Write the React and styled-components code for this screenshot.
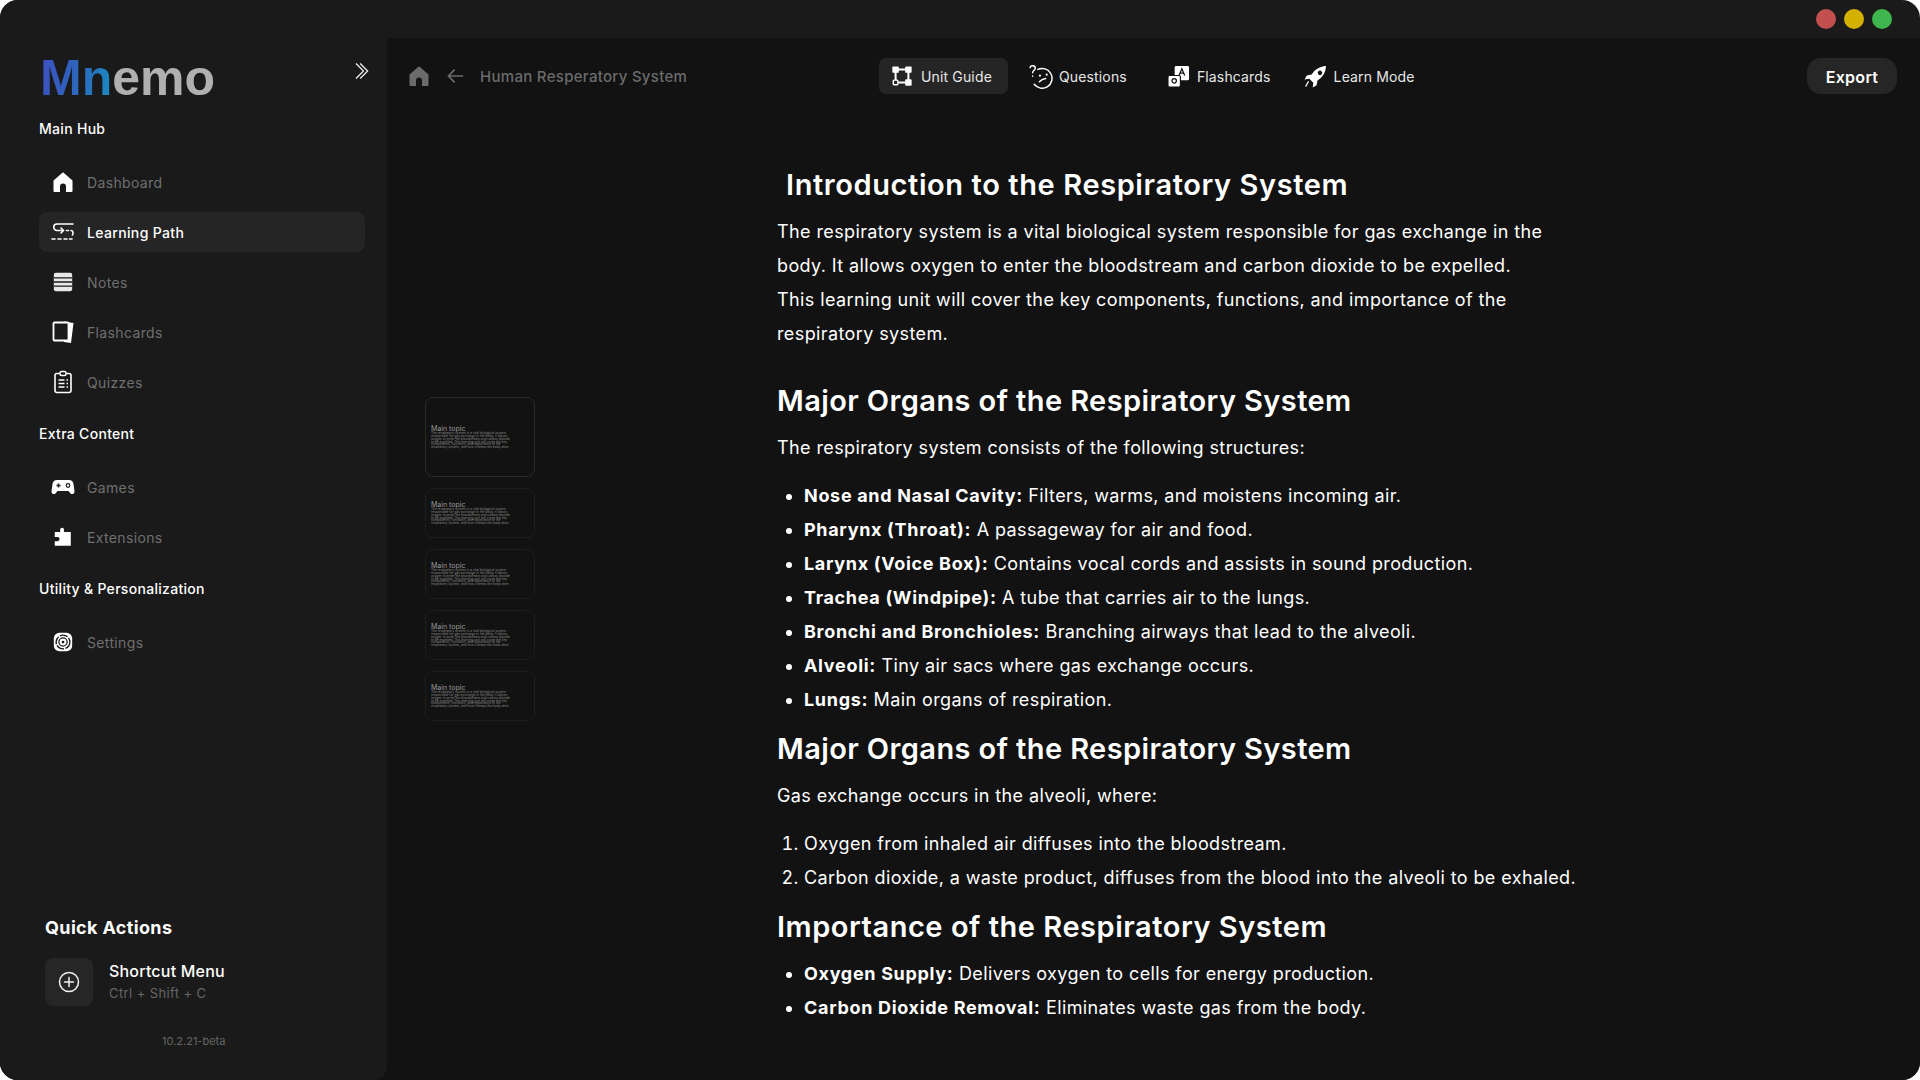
import React from 'react';
import styled, { createGlobalStyle } from 'styled-components';

const GlobalStyle = createGlobalStyle`
    html, body {
        margin: 0;
        padding: 0;
        background: #ffffff;
    }
    * {
        box-sizing: border-box;
    }
`;

const FONT = `'Inter', 'Noto Sans', sans-serif`;

const Window = styled.div`
    width: 1920px;
    height: 1080px;
    display: flex;
    flex-direction: column;
    background: #1a1a1a;
    border-radius: 18px;
    overflow: hidden;
    font-family: ${FONT};
    color: #fff;
`;

const TitleBar = styled.div`
    height: 38px;
    flex: none;
    display: flex;
    align-items: center;
    justify-content: flex-end;
    gap: 8px;
    padding-right: 28px;
`;

const Dot = styled.span`
    width: 20px;
    height: 20px;
    border-radius: 50%;
    background: ${(p) => p.$color};
`;

const Body = styled.div`
    flex: 1;
    min-height: 0;
    display: flex;
    background: #121212;
`;

const Sidebar = styled.aside`
    width: 387px;
    flex: none;
    margin-top: -38px;
    padding: 0 22px 0 39px;
    background: #1a1a1a;
    border-bottom-right-radius: 14px;
    display: flex;
    flex-direction: column;
`;

const LogoRow = styled.div`
    height: 118px;
    padding-top: 50px;
    display: flex;
    justify-content: space-between;
    align-items: flex-start;
`;

const Logo = styled.div`
    font-family: 'Liberation Sans', Arial, sans-serif;
    font-weight: 700;
    font-size: 50px;
    line-height: 56px;
    color: #b0b0b0;
    margin-left: 1px;
`;

const LogoAccent = styled.span`
    background: linear-gradient(100deg, #3f4fc0 0%, #2f62bd 45%, #1a8cc0 100%);
    -webkit-background-clip: text;
    background-clip: text;
    color: transparent;
`;

const Collapse = styled.div`
    margin: 11px -6px 0 0;
    color: #f0f0f0;
    display: flex;
`;

const SectionLabel = styled.div`
    font-size: 14px;
    line-height: 22px;
    font-weight: 500;
    letter-spacing: 0.3px;
    margin-bottom: ${(p) => p.$gap}px;
`;

const NavList = styled.div`
    display: flex;
    flex-direction: column;
    margin-bottom: 11px;
`;

const NavItem = styled.div`
    height: 40px;
    margin-bottom: 10px;
    display: flex;
    align-items: center;
    border-radius: 8px;
    background: ${(p) => (p.$active ? '#252525' : 'transparent')};
    color: ${(p) => (p.$active ? '#ffffff' : '#6f6f6f')};
    font-size: 14px;
    letter-spacing: 0.35px;
    font-weight: ${(p) => (p.$active ? 500 : 400)};
`;

const NavIcon = styled.span`
    width: 48px;
    flex: none;
    display: flex;
    justify-content: center;
    color: #fff;
`;

const Spacer = styled.div`
    flex: 1;
`;

const QuickTitle = styled.div`
    margin-left: 6px;
    font-size: 18px;
    font-weight: 700;
    line-height: 24px;
    letter-spacing: 0.35px;
    margin-bottom: 18px;
`;

const Shortcut = styled.div`
    margin-left: 6px;
    display: flex;
    align-items: center;
    gap: 16px;
`;

const ShortcutBox = styled.div`
    width: 48px;
    height: 48px;
    border-radius: 8px;
    background: #262626;
    display: flex;
    align-items: center;
    justify-content: center;
`;

const ShortcutName = styled.div`
    font-size: 16px;
    line-height: 22px;
    font-weight: 500;
    letter-spacing: 0.2px;
`;

const ShortcutKeys = styled.div`
    font-size: 13px;
    line-height: 22px;
    color: #666;
    letter-spacing: 0.4px;
`;

const Version = styled.div`
    margin: 27px 0 31px 123px;
    font-size: 11px;
    line-height: 16px;
    color: #666;
`;

const Main = styled.main`
    flex: 1;
    min-width: 0;
    display: flex;
    flex-direction: column;
`;

const TopBar = styled.div`
    height: 58px;
    margin-top: 20px;
    padding: 0 23px 0 20px;
    flex: none;
    display: grid;
    grid-template-columns: 472px auto 1fr;
    align-items: start;
`;

const Crumbs = styled.div`
    height: 36px;
    display: flex;
    align-items: center;
    color: #6b6b6b;
    font-size: 15px;
    letter-spacing: 0.3px;
    font-weight: 500;
`;

const CrumbIcon = styled.span`
    display: flex;
    margin-right: ${(p) => p.$gap}px;
`;

const Tabs = styled.div`
    display: flex;
    gap: 13px;
`;

const Tab = styled.div`
    height: 36px;
    padding: 0 ${(p) => p.$right}px 0 ${(p) => p.$left}px;
    display: flex;
    align-items: center;
    gap: ${(p) => p.$gap}px;
    border-radius: 7px;
    background: ${(p) => (p.$active ? '#252525' : 'transparent')};
    color: #e8e8e8;
    font-size: 14px;
    letter-spacing: 0.15px;
`;

const ExportButton = styled.button`
    justify-self: end;
    width: 90px;
    height: 36px;
    padding: 2px 0 0;
    border: none;
    border-radius: 14px;
    background: #262626;
    color: #fff;
    font-family: ${FONT};
    font-size: 16px;
    font-weight: 600;
    letter-spacing: 0.3px;
`;

const Workspace = styled.div`
    flex: 1;
    min-height: 0;
    display: flex;
    padding-left: 38px;
`;

const ThumbRail = styled.div`
    width: 352px;
    flex: none;
    padding-top: 281px;
    display: flex;
    flex-direction: column;
    gap: 11px;
`;

const Thumb = styled.div`
    width: 110px;
    height: ${(p) => (p.$active ? 80 : 50)}px;
    padding: 0 5px;
    display: flex;
    flex-direction: column;
    justify-content: center;
    border-radius: 8px;
    border: 1px solid ${(p) => (p.$active ? '#2a2a2a' : '#1e1e1e')};
    overflow: hidden;
`;

const ThumbTitle = styled.div`
    font-size: 7px;
    line-height: 7px;
    color: #999;
`;

const ThumbText = styled.div`
    font-size: 3.2px;
    line-height: 2.8px;
    color: #888;
    width: 82px;
`;

const Article = styled.article`
    padding-top: 49px;
    width: 820px;
    flex: none;
    font-size: 18px;
    line-height: 34px;
    letter-spacing: 0.39px;
    white-space: nowrap;
`;

const Heading = styled.h2`
    margin: ${(p) => p.$top}px 0 10px;
    padding-left: ${(p) => p.$indent || 0}px;
    font-size: 29px;
    line-height: 40px;
    font-weight: 600;
    letter-spacing: ${(p) => p.$track}px;
`;

const Para = styled.p`
    margin: 0;
`;

const List = styled.ul`
    margin: ${(p) => p.$top}px 0 0;
    padding: 0 0 0 27px;
`;

const Numbered = styled.ol`
    margin: 14px 0 0;
    padding: 0 0 0 27px;
`;

const Item = styled.li`
    strong {
        font-weight: 700;
        letter-spacing: 0.68px;
    }
`;

const Svg = ({ size = 20, children, ...rest }) => (
    <svg width={size} height={size} viewBox="0 0 24 24" fill="none" {...rest}>
        {children}
    </svg>
);

const HomeIcon = ({ size }) => (
    <Svg size={size}>
        <path
            fill="currentColor"
            d="M12 2.200 2.500 10.600V21a1 1 0 0 0 1 1H9v-5.500a3 3 0 0 1 6 0V22h5.500a1 1 0 0 0 1-1V10.600z"
        />
    </Svg>
);

const PathIcon = () => (
    <Svg size={24} stroke="currentColor" strokeWidth="1.600" strokeLinecap="round">
        <path d="M22 4H6a3 3 0 0 0 0 6.500h6" />
        <path d="M10 8l2.500 2.500L10 13" />
        <path d="M15.500 10.500h2M20 10.500c2 0 2.500 2.500 1.500 4.500" />
        <path d="M1 19h3M7 19h3M13 19h3M18.500 19H21" />
    </Svg>
);

const NotesIcon = () => (
    <Svg size={22}>
        <rect x="2" y="2" width="20" height="20" rx="2" fill="#e8e8e8" />
        <path stroke="#1a1a1a" strokeWidth="1.600" d="M2 7.500h20M2 12h20M2 16.500h20" />
    </Svg>
);

const CardsIcon = () => (
    <Svg size={24}>
        <path fill="#fff" d="M13 1.500l9.500 1.500-2.500 20-7-1z" />
        <rect x="2.500" y="2.500" width="15" height="18" rx="1" fill="#1a1a1a" stroke="#fff" strokeWidth="1.800" />
    </Svg>
);

const QuizIcon = () => (
    <Svg size={24}>
        <rect x="4" y="3.500" width="16" height="19" rx="2" stroke="#fff" strokeWidth="1.600" />
        <rect x="9" y="1.500" width="6" height="4" rx="1.500" fill="#1a1a1a" stroke="#fff" strokeWidth="1.400" />
        <path stroke="#fff" strokeWidth="1.600" d="M7.500 10h6M15.500 10h1.500M7.500 13.500h6M15.500 13.500h1.500M7.500 17h6M15.500 17h1.500" />
    </Svg>
);

const GameIcon = () => (
    <Svg size={24}>
        <path
            fill="#fff"
            d="M6 5h12c2.500 0 4 1.500 4.500 4l1 7.500c.3 2.300-2.700 3.500-4.200 1.700L17.500 16h-11l-1.800 2.200C3.200 20 .2 18.800.5 16.500l1-7.500C2 6.500 3.500 5 6 5z"
        />
        <path stroke="#1a1a1a" strokeWidth="1.500" d="M5.500 10.500h4M7.500 8.500v4" />
        <circle cx="17" cy="10.500" r="1.800" stroke="#1a1a1a" strokeWidth="1.200" />
    </Svg>
);

const PuzzleIcon = () => (
    <Svg size={22}>
        <path
            fill="#fff"
            d="M3 6.500h6V5a2.200 2.200 0 1 1 4 0v1.500h7.500V21.500H3v-5h3a2 2 0 1 0 0-4.500H3z"
        />
    </Svg>
);

const SettingsIcon = () => (
    <Svg size={22}>
        <rect x="2" y="2" width="20" height="20" rx="6" fill="#fff" />
        <circle cx="12" cy="12" r="7.500" stroke="#1a1a1a" strokeWidth="1.500" strokeDasharray="9 1.500" />
        <circle cx="12" cy="12" r="4.500" stroke="#1a1a1a" strokeWidth="1.400" />
        <circle cx="12" cy="12" r="1.500" fill="#1a1a1a" />
    </Svg>
);

const ChevronsIcon = () => (
    <Svg size={20} stroke="currentColor" strokeWidth="1.500">
        <path d="M6 3l9 9-9 9M11 3l9 9-9 9" />
    </Svg>
);

const PlusCircleIcon = () => (
    <Svg size={24} stroke="#f0f0f0" strokeWidth="1.500" strokeLinecap="round">
        <circle cx="12" cy="12" r="9.500" />
        <path d="M12 7.500v9M7.500 12h9" />
    </Svg>
);

const BackIcon = () => (
    <Svg size={20} stroke="currentColor" strokeWidth="2" strokeLinecap="round" strokeLinejoin="round">
        <path d="M21 12H4M11 5l-7 7 7 7" />
    </Svg>
);

const GuideIcon = () => (
    <Svg size={22}>
        <path stroke="#fff" strokeWidth="2.200" d="M5 5h14M5 5v14M19 5v14M8 19h11" />
        <rect x="1.500" y="1.500" width="7" height="7" rx="1" fill="#fff" />
        <rect x="15.500" y="1.500" width="7" height="7" rx="1" fill="#fff" />
        <rect x="15.500" y="15.500" width="7" height="7" rx="1" fill="#fff" />
        <rect x="2.500" y="16.500" width="5" height="5" rx="1" fill="#252525" stroke="#fff" strokeWidth="1.600" />
    </Svg>
);

const QuestionIcon = () => (
    <Svg size={25} stroke="#fff" strokeWidth="1.400" strokeLinecap="round">
        <path d="M8.500 5.200A9.500 9.500 0 1 1 5 19.500" />
        <path d="M1 3.500C1.500 1 6 1 6 4c0 2-2.500 2-2.500 4.500" />
        <path d="M3.500 11.500v.2" />
        <path d="M10.500 11v.2M17 10v.2" strokeWidth="2" />
        <path d="M10 17c1.500-1.500 3.500-2.500 6-3" />
    </Svg>
);

const AbCardsIcon = () => (
    <Svg size={23}>
        <rect x="8" y="1" width="15" height="15" rx="1.500" fill="#fff" />
        <rect x="1" y="11" width="13" height="12" rx="1.500" fill="#fff" stroke="#121212" strokeWidth="1.200" />
        <path stroke="#121212" strokeWidth="1.300" d="M12.500 11l3-7 3 7M13.700 8.500h3.600" />
        <circle cx="7.500" cy="16.500" r="2.300" stroke="#121212" strokeWidth="1.300" />
    </Svg>
);

const RocketIcon = () => (
    <Svg size={23}>
        <path
            fill="#fff"
            d="M23 1C15.500 1.500 11 5 8 10l-5 1-2.500 4 5-.6 4.200 4.200-.6 5 4-2.500 1-5C19 13 22.500 8.500 23 1zM15 6.500a2.300 2.300 0 1 1 3.300 3.300A2.300 2.300 0 0 1 15 6.500z"
        />
        <path stroke="#fff" strokeWidth="1.300" strokeLinecap="round" d="M4.500 17.500 2 22" />
    </Svg>
);

const thumbCopy =
    'The respiratory system is a vital biological system responsible for gas exchange in the body. It allows oxygen to enter the bloodstream and carbon dioxide to be expelled. This learning unit will cover the key components, functions, and importance of the respiratory system, and how it keeps the body alive.';

const mainHub = [
    { label: 'Dashboard', icon: <HomeIcon size={24} /> },
    { label: 'Learning Path', icon: <PathIcon />, active: true },
    { label: 'Notes', icon: <NotesIcon /> },
    { label: 'Flashcards', icon: <CardsIcon /> },
    { label: 'Quizzes', icon: <QuizIcon /> },
];

const extras = [
    { label: 'Games', icon: <GameIcon /> },
    { label: 'Extensions', icon: <PuzzleIcon /> },
];

const renderNav = (items) => (
    <NavList>
        {items.map((item) => (
            <NavItem key={item.label} $active={item.active}>
                <NavIcon>{item.icon}</NavIcon>
                {item.label}
            </NavItem>
        ))}
    </NavList>
);

export default function App() {
    return (
        <Window>
            <GlobalStyle />
            <TitleBar>
                <Dot $color="#c44f4f" />
                <Dot $color="#d4b000" />
                <Dot $color="#3fb54e" />
            </TitleBar>
            <Body>
                <Sidebar>
                    <LogoRow>
                        <Logo>
                            <LogoAccent>Mn</LogoAccent>emo
                        </Logo>
                        <Collapse>
                            <ChevronsIcon />
                        </Collapse>
                    </LogoRow>
                    <SectionLabel $gap={22}>Main Hub</SectionLabel>
                    {renderNav(mainHub)}
                    <SectionLabel $gap={22}>Extra Content</SectionLabel>
                    {renderNav(extras)}
                    <SectionLabel $gap={22}>Utility &amp; Personalization</SectionLabel>
                    {renderNav([{ label: 'Settings', icon: <SettingsIcon /> }])}
                    <Spacer />
                    <QuickTitle>Quick Actions</QuickTitle>
                    <Shortcut>
                        <ShortcutBox>
                            <PlusCircleIcon />
                        </ShortcutBox>
                        <div>
                            <ShortcutName>Shortcut Menu</ShortcutName>
                            <ShortcutKeys>Ctrl + Shift + C</ShortcutKeys>
                        </div>
                    </Shortcut>
                    <Version>10.2.21-beta</Version>
                </Sidebar>
                <Main>
                    <TopBar>
                        <Crumbs>
                            <CrumbIcon $gap={14}>
                                <HomeIcon size={24} />
                            </CrumbIcon>
                            <CrumbIcon $gap={15}>
                                <BackIcon />
                            </CrumbIcon>
                            Human Resperatory System
                        </Crumbs>
                        <Tabs>
                            <Tab $active $left={12} $right={16} $gap={8}>
                                <GuideIcon />
                                Unit Guide
                            </Tab>
                            <Tab $left={8} $right={18} $gap={5}>
                                <QuestionIcon />
                                Questions
                            </Tab>
                            <Tab $left={9} $right={11} $gap={7}>
                                <AbCardsIcon />
                                Flashcards
                            </Tab>
                            <Tab $left={9} $right={9} $gap={7}>
                                <RocketIcon />
                                Learn Mode
                            </Tab>
                        </Tabs>
                        <ExportButton>Export</ExportButton>
                    </TopBar>
                    <Workspace>
                        <ThumbRail>
                            {[true, false, false, false, false].map((active, i) => (
                                <Thumb key={i} $active={active}>
                                    <ThumbTitle>Main topic</ThumbTitle>
                                    <ThumbText>{thumbCopy}</ThumbText>
                                </Thumb>
                            ))}
                        </ThumbRail>
                        <Article>
                            <Heading $top={0} $indent={9} $track={0.6}>Introduction to the Respiratory System</Heading>
                            <Para>
                                The respiratory system is a vital biological system responsible for gas exchange in the
                                <br />
                                body. It allows oxygen to enter the bloodstream and carbon dioxide to be expelled.
                                <br />
                                This learning unit will cover the key components, functions, and importance of the
                                <br />
                                respiratory system.
                            </Para>
                            <Heading $top={30} $track={0.4}>Major Organs of the Respiratory System</Heading>
                            <Para>The respiratory system consists of the following structures:</Para>
                            <List $top={14}>
                                <Item><strong>Nose and Nasal Cavity:</strong> Filters, warms, and moistens incoming air.</Item>
                                <Item><strong>Pharynx (Throat):</strong> A passageway for air and food.</Item>
                                <Item><strong>Larynx (Voice Box):</strong> Contains vocal cords and assists in sound production.</Item>
                                <Item><strong>Trachea (Windpipe):</strong> A tube that carries air to the lungs.</Item>
                                <Item><strong>Bronchi and Bronchioles:</strong> Branching airways that lead to the alveoli.</Item>
                                <Item><strong>Alveoli:</strong> Tiny air sacs where gas exchange occurs.</Item>
                                <Item><strong>Lungs:</strong> Main organs of respiration.</Item>
                            </List>
                            <Heading $top={12} $track={0.4}>Major Organs of the Respiratory System</Heading>
                            <Para>Gas exchange occurs in the alveoli, where:</Para>
                            <Numbered>
                                <Item>Oxygen from inhaled air diffuses into the bloodstream.</Item>
                                <Item>Carbon dioxide, a waste product, diffuses from the blood into the alveoli to be exhaled.</Item>
                            </Numbered>
                            <Heading $top={12} $track={0.53}>Importance of the Respiratory System</Heading>
                            <List $top={0}>
                                <Item><strong>Oxygen Supply:</strong> Delivers oxygen to cells for energy production.</Item>
                                <Item><strong>Carbon Dioxide Removal:</strong> Eliminates waste gas from the body.</Item>
                            </List>
                        </Article>
                    </Workspace>
                </Main>
            </Body>
        </Window>
    );
}
